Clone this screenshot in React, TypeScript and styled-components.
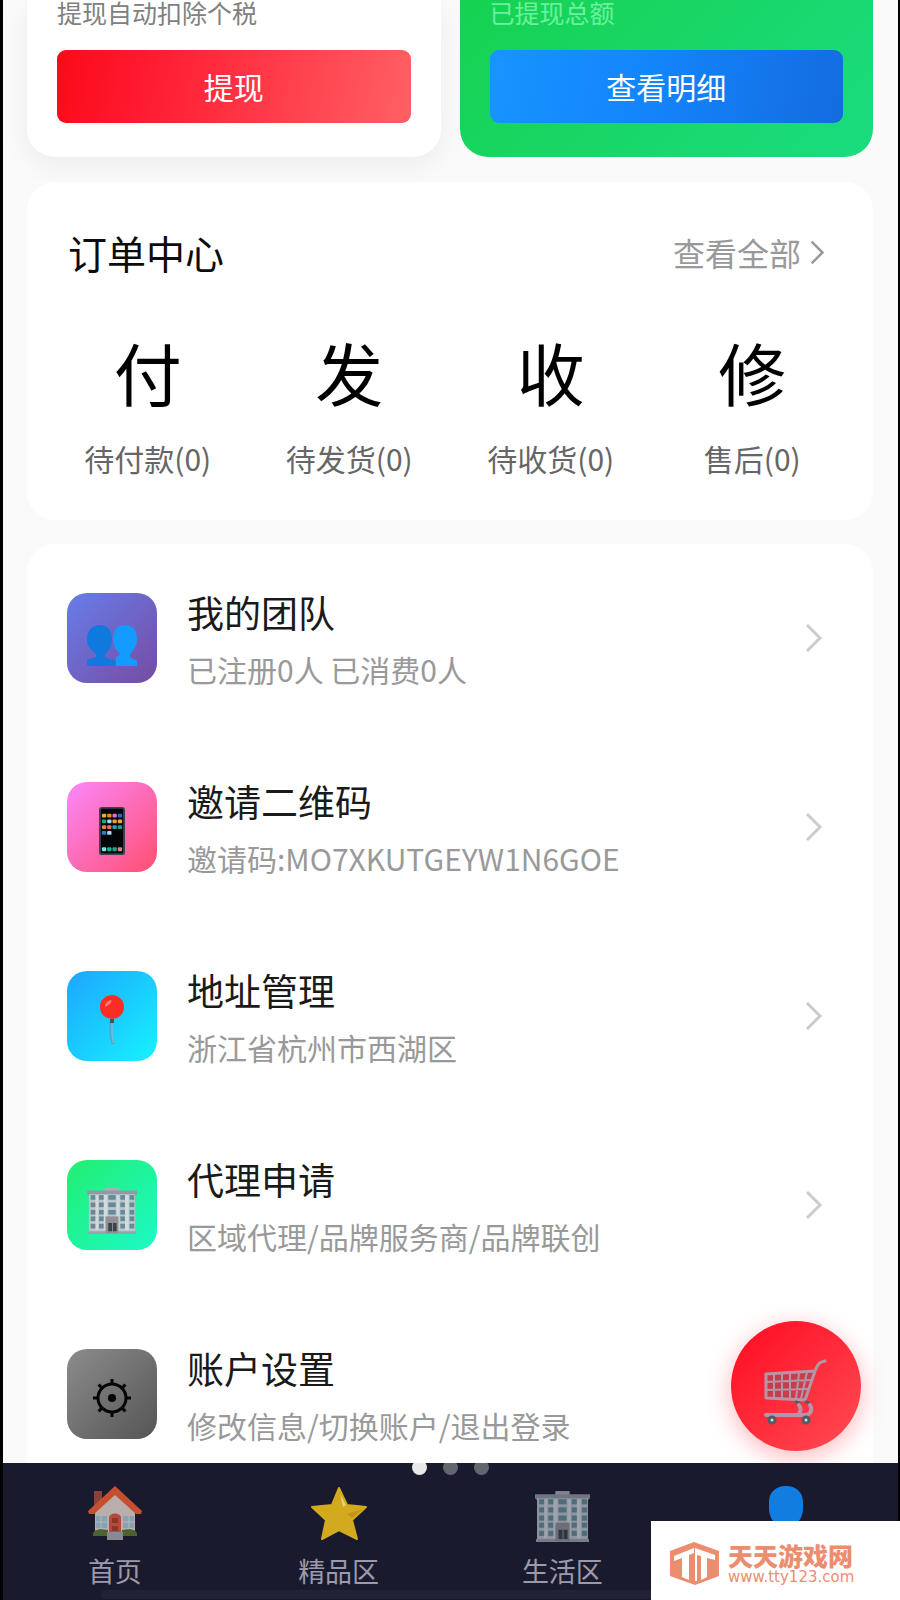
import React from 'react';
import styled, {createGlobalStyle} from "styled-components";

type OrderType = {
    glyph: string
    label: string
}

type MenuType = {
    title: string
    note: string
    background: string
    icon: React.ReactNode
}

type TabType = {
    id: string
    label?: string
    icon: React.ReactNode
}

const Chevron = ({size}: { size: number }) => (
    <svg width={size * 0.6} height={size} viewBox="0 0 18 30" fill="none" stroke="currentColor" strokeWidth="3">
        <path d="M2 2L15 15L2 28"/>
    </svg>
);

const TeamIcon = () => (
    <svg width="52" height="54" viewBox="0 0 52 54">
        <path fill="#149bff" d="M39 10c8 0 12 6 12 14 0 7-3 11-7 15v3c2 3 6 2 7 4v5H30v-9c3-1 4-2 4-3-4-4-7-8-7-15 0-8 4-14 12-14z"/>
        <path fill="#1079de" d="M14 10c8 0 12 6 12 14 0 7-2 11-7 15v3c2 2 9 2 10 4v5H1v-5c1-3 7-2 9-4v-3C5 35 1 31 1 24c0-8 5-14 13-14z"/>
    </svg>
);

const APPS = ['#f5a33b', '#f08a24', '#e86cc0', '#1f6fc4', '#23a58c', '#9ad9ee', '#f39a2d', '#f2a541', '#e9853a', '#f06a5a', '#2b9cc0', '#2a9c85', '#2f79c9', '#a7d8ee'];
const DOCK = ['#7fe0dc', '#2aa9a0', '#2a9d8f', '#f07a86'];

const PhoneIcon = () => (
    <svg width="26" height="50" viewBox="0 0 27 50">
        <rect x="1" y="1" width="25" height="48" rx="2" fill="#030406" stroke="#3b4250" strokeWidth="2"/>
        {APPS.map((color, i) => (
            <rect key={i} x={3 + (i % 4) * 5.5} y={7 + Math.floor(i / 4) * 6} width="4.5" height="4" rx="1" fill={color}/>
        ))}
        {DOCK.map((color, i) => (
            <rect key={i} x={3 + i * 5.5} y="42" width="4.5" height="4" rx="1" fill={color}/>
        ))}
    </svg>
);

const PinIcon = () => (
    <svg width="26" height="50" viewBox="0 0 26 50">
        <path d="M12 27v13c0 4 2 4 2 9" fill="none" stroke="#4fa6c9" strokeWidth="3"/>
        <path d="M13 27v13c0 4 1 4 1 8" fill="none" stroke="#8fc4d4" strokeWidth="1"/>
        <rect x="11" y="24" width="4" height="4" fill="#39566b"/>
        <circle cx="13" cy="12" r="12" fill="#fb2d25"/>
        <path d="M6 12c0-4 3-7 7-7l-2 4z" fill="#ff7a70"/>
    </svg>
);

const BuildingIcon = ({size, dim}: { size: number, dim?: boolean }) => (
    <svg width={size} height={size} viewBox="0 -4 54 54" opacity={dim ? 0.72 : 1}>
        <path fill="#a9afb7" d="M20 0h14v5H20z"/>
        <path fill="#9299a4" d="M0 3h54v4l-2 2H2L0 7z"/>
        <path fill="#bcc5cc" d="M2 7h50v42H2z"/>
        <path fill="#d2dadf" d="M9 8h3v38H9zM18 8h4v38h-4zM32 8h3v38h-3zM41 8h4v38h-4z"/>
        <path fill="#9aa3ab" d="M1 47h52v3H1z"/>
        {[8, 16, 24, 31, 39].map(y => (
            <g key={y} fill="#638c96">
                <rect x="4" y={y} width="5" height="5"/>
                <rect x="13" y={y} width="5" height="5"/>
                {y < 30 && <rect x="23" y={y} width="8" height="5"/>}
                <rect x="36" y={y} width="5" height="5"/>
                <rect x="46" y={y} width="5" height="5"/>
            </g>
        ))}
        <path fill="#8f8f95" d="M20 31h14v18H20z"/>
        <path fill="#39434d" d="M23 38h4v9h-4zM28 38h4v9h-4z"/>
    </svg>
);

const GearIcon = () => (
    <svg width="38" height="38" viewBox="0 0 38 38" fill="none" stroke="#050505" strokeWidth="3">
        <circle cx="19" cy="19" r="14"/>
        <circle cx="19" cy="19" r="4" fill="#050505" stroke="none"/>
        {[0, 45, 90, 135, 180, 225, 270, 315].map(angle => (
            <path key={angle} d="M19 0V6" transform={`rotate(${angle} 19 19)`}/>
        ))}
    </svg>
);

const CartIcon = () => (
    <svg width="64" height="68" viewBox="0 0 64 68" fill="none" stroke="#b795a8" strokeLinecap="round" strokeLinejoin="round">
        <path fill="#8a5363" fillOpacity="0.45" stroke="none" d="M2 15L51 12L41 41L2 39z"/>
        <path strokeWidth="2" d="M10 15V39M18 15V39M26 14V39M35 14L32 40M43 13L37 40M2 23L48 21M2 31L45 30"/>
        <path strokeWidth="3" d="M2 15L51 12L41 41L2 39zM51 12C54 4 56 3 61 2"/>
        <path stroke="#625865" strokeWidth="3" d="M32 43l3 1M42 43l3 1"/>
        <path strokeWidth="4" d="M35 46c2 3 2 6 0 9M46 46c3 5 0 10-5 10H2"/>
        <g stroke="#535c63" strokeWidth="3" fill="#b9e7e6">
            <circle cx="8" cy="61" r="3"/>
            <circle cx="42" cy="61" r="3"/>
        </g>
    </svg>
);

const HouseIcon = () => (
    <svg width="54" height="56" viewBox="0 0 54 56">
        <path fill="#8c4136" d="M6 5h8v17H6z"/>
        <path fill="#b9aeab" d="M7 25L27 5l20 20v24H7z"/>
        <path fill="#c4502f" d="M27 0L54 25l-1 3h-5L27 9 6 28H1l-1-3z"/>
        <path fill="#86a3b5" d="M8 30h11v12H8zM35 30h11v12H35z"/>
        <path stroke="#b9b4b5" strokeWidth="1" d="M13 30v12M8 36h11M41 30v12M35 36h11"/>
        <path fill="#b54a37" d="M21 46V32c0-6 12-6 12 0v14z"/>
        <path fill="#8c3529" d="M24 32h6v5h-6zM24 40h6v5h-6z"/>
        <path fill="#4b6332" d="M5 50c-1-6 5-8 15-6v6zM34 44c10-2 16 0 15 6H34z"/>
        <path fill="#898991" d="M19 46h16v8H19z"/>
    </svg>
);

const StarIcon = () => (
    <svg width="56" height="56" viewBox="0 0 56 56">
        <path fill="#d2aa1d" stroke="#d2aa1d" strokeWidth="2" strokeLinejoin="round" d="M28 2l8 17 19 2-14 13 5 19-18-9-17 9 4-19L1 21l20-2z"/>
        <path fill="#e5d27a" d="M29 8l6 11-3 2z"/>
        <path fill="#c4941a" d="M52 23L41 32l-5-4z"/>
    </svg>
);

const UserIcon = () => (
    <svg width="54" height="56" viewBox="0 0 54 56">
        <path fill="#127de1" d="M27 0c11 0 17 7 17 16v6c0 9-4 14-10 18v4c2 4 17 3 17 12H3c0-9 15-8 17-12v-4c-6-4-10-9-10-18v-6C10 7 16 0 27 0z"/>
    </svg>
);

const LogoIcon = () => (
    <svg width="50" height="44" viewBox="0 0 50 44">
        <path fill="#ed8d70" d="M24 0l25 9v25L25 43 0 34V9z"/>
        <path fill="#fff" d="M4 14l20-8v5l-5 2v25l-7-3V16l-8 3z"/>
        <path fill="#fff" d="M25 6l20 7v5l-8-2v19l-6 3V14l-4-1v26h-2z"/>
    </svg>
);

const orders: OrderType[] = [
    {glyph: '付', label: '待付款(0)'},
    {glyph: '发', label: '待发货(0)'},
    {glyph: '收', label: '待收货(0)'},
    {glyph: '修', label: '售后(0)'},
];

const menu: MenuType[] = [
    {title: '我的团队', note: '已注册0人 已消费0人', background: '#667eea, #764ba2', icon: <TeamIcon/>},
    {title: '邀请二维码', note: '邀请码:MO7XKUTGEYW1N6GOE', background: '#fb88fb, #ff4f70', icon: <PhoneIcon/>},
    {title: '地址管理', note: '浙江省杭州市西湖区', background: '#1ea5ff, #16f2ff', icon: <PinIcon/>},
    {title: '代理申请', note: '区域代理/品牌服务商/品牌联创', background: '#22ee70, #1cfac8', icon: <BuildingIcon size={50}/>},
    {title: '账户设置', note: '修改信息/切换账户/退出登录', background: '#8c8c8c, #555555', icon: <GearIcon/>},
];

const tabs: TabType[] = [
    {id: 'home', label: '首页', icon: <HouseIcon/>},
    {id: 'featured', label: '精品区', icon: <StarIcon/>},
    {id: 'life', label: '生活区', icon: <BuildingIcon size={55} dim/>},
    {id: 'mine', icon: <UserIcon/>},
];

const App = () => {
    return (
        <Screen>
            <GlobalStyle/>
            <Content>
                <Wallet>
                    <WalletCard>
                        <WalletNote>提现自动扣除个税</WalletNote>
                        <WalletButton colors="#fb0a18, #ff1a30 25%, #ff6065">提现</WalletButton>
                    </WalletCard>
                    <WalletCard green>
                        <WalletNote green>已提现总额</WalletNote>
                        <WalletButton colors="#1894ff, #1385fb 45%, #146be0">查看明细</WalletButton>
                    </WalletCard>
                </Wallet>
                <Orders>
                    <OrdersHeader>
                        <OrdersTitle>订单中心</OrdersTitle>
                        <AllLink href="#orders">查看全部<Chevron size={25}/></AllLink>
                    </OrdersHeader>
                    <OrdersGrid>
                        {orders.map(order => (
                            <OrderButton key={order.glyph}>
                                <OrderGlyph>{order.glyph}</OrderGlyph>
                                <OrderLabel>{order.label}</OrderLabel>
                            </OrderButton>
                        ))}
                    </OrdersGrid>
                </Orders>
                <Menu>
                    {menu.map(item => (
                        <MenuRow key={item.title} href="#menu">
                            <MenuIcon colors={item.background}>{item.icon}</MenuIcon>
                            <MenuText>
                                <MenuTitle>{item.title}</MenuTitle>
                                <MenuNote>{item.note}</MenuNote>
                            </MenuText>
                            <MenuArrow><Chevron size={30}/></MenuArrow>
                        </MenuRow>
                    ))}
                </Menu>
            </Content>
            <CartButton aria-label="购物车"><CartIcon/></CartButton>
            <TabBar>
                {tabs.map(tab => (
                    <Tab key={tab.id} href={`#${tab.id}`}>
                        <TabIcon>{tab.icon}</TabIcon>
                        {tab.label}
                    </Tab>
                ))}
                <Dots>
                    <Dot active/>
                    <Dot/>
                    <Dot/>
                </Dots>
                <HomeBar/>
            </TabBar>
            <SiteBadge>
                <LogoIcon/>
                <div>
                    <SiteName>天天游戏网</SiteName>
                    <SiteUrl>www.tty123.com</SiteUrl>
                </div>
            </SiteBadge>
        </Screen>
    );
}

export default App;

const GlobalStyle = createGlobalStyle`
  * {
    box-sizing: border-box;
  }
  body {
    margin: 0;
    font-family: "Noto Sans CJK SC", sans-serif;
    background: #000;
  }
  a {
    text-decoration: none;
  }
  button {
    padding: 0;
    border: none;
    background: none;
    font-family: inherit;
    cursor: pointer;
  }
`;
const Screen = styled.div`
  position: relative;
  display: flex;
  flex-direction: column;
  height: 100vh;
  overflow: hidden;
  padding: 0 2px 0 3px;
  background: #000;
`;
const Content = styled.main`
  flex: 1;
  min-height: 0;
  overflow: hidden;
  padding: 0 25px 0 24px;
  background: #fafafa;
`;
const Wallet = styled.section`
  display: grid;
  grid-template-columns: 1fr 1fr;
  gap: 19px;
`;
const WalletCard = styled.div<{ green?: boolean }>`
  padding: 0 30px 34px;
  border-radius: 0 0 28px 28px;
  background: ${(props) => props.green ? 'linear-gradient(135deg, #16d250, #1adc80)' : '#fff'};
  box-shadow: ${(props) => props.green ? 'none' : '0 8px 30px rgba(0, 0, 0, 0.06)'};
`;
const WalletNote = styled.div<{ green?: boolean }>`
  margin-bottom: 26px;
  font-size: 25px;
  line-height: 24px;
  color: ${(props) => props.green ? '#6cf0a0' : '#808080'};
`;
const WalletButton = styled.button<{ colors: string }>`
  width: 100%;
  height: 73px;
  padding-bottom: 2px;
  border-radius: 9px;
  font-size: 30px;
  color: #fff;
  background: linear-gradient(100deg, ${(props) => props.colors});
`;
const Orders = styled.section`
  position: relative;
  margin-top: 25px;
  padding: 46px 20px 42px;
  border-radius: 28px;
  background: #fff;
`;
const OrdersHeader = styled.div`
  display: flex;
  align-items: center;
  justify-content: space-between;
  padding: 0 28px 0 21px;
`;
const OrdersTitle = styled.h2`
  margin: 0;
  font-size: 39px;
  font-weight: 400;
  line-height: 48px;
  color: #0c0c0c;
`;
const AllLink = styled.a`
  display: flex;
  align-items: center;
  gap: 9px;
  font-size: 32px;
  line-height: 48px;
  color: #999;
`;
const OrdersGrid = styled.div`
  display: grid;
  grid-template-columns: repeat(4, 1fr);
  margin-top: 56px;
`;
const OrderButton = styled.button`
  display: flex;
  flex-direction: column;
  align-items: center;
  gap: 26px;
`;
const OrderGlyph = styled.span`
  font-size: 68px;
  line-height: 80px;
  color: #000;
`;
const OrderLabel = styled.span`
  font-size: 30px;
  line-height: 40px;
  color: #666;
`;
const Menu = styled.nav`
  margin-top: 24px;
  border-radius: 28px;
  background: #fff;
`;
const MenuRow = styled.a`
  display: flex;
  align-items: center;
  gap: 30px;
  height: 189px;
  padding: 0 50px 0 40px;
  border-bottom: 1px solid #fefefe;
`;
const MenuIcon = styled.span<{ colors: string }>`
  display: flex;
  align-items: center;
  justify-content: center;
  flex-shrink: 0;
  width: 90px;
  height: 90px;
  padding-top: 8px;
  border-radius: 20px;
  background: linear-gradient(135deg, ${(props) => props.colors});
`;
const MenuText = styled.span`
  display: flex;
  flex: 1;
  flex-direction: column;
  gap: 13px;
  padding-bottom: 3px;
`;
const MenuTitle = styled.span`
  font-size: 37px;
  line-height: 52px;
  color: #1a1a1a;
`;
const MenuNote = styled.span`
  font-size: 30px;
  line-height: 36px;
  color: #999;
`;
const MenuArrow = styled.span`
  display: flex;
  color: #ccc;
`;
const CartButton = styled.button`
  position: absolute;
  right: 39px;
  bottom: 149px;
  display: flex;
  align-items: center;
  justify-content: center;
  width: 130px;
  height: 130px;
  padding-top: 14px;
  border-radius: 50%;
  background: linear-gradient(135deg, #ff0a20, #ff4d55);
  box-shadow: 0 6px 24px rgba(255, 50, 60, 0.35);
`;
const TabBar = styled.nav`
  position: relative;
  display: grid;
  grid-template-columns: repeat(4, 1fr);
  height: 137px;
  padding-top: 23px;
  background: #1a1a2e;
`;
const Tab = styled.a`
  display: flex;
  flex-direction: column;
  align-items: center;
  gap: 9px;
  font-size: 27px;
  line-height: 40px;
  color: #9a9aac;
`;
const TabIcon = styled.span`
  display: flex;
  align-items: center;
  justify-content: center;
  height: 56px;
`;
const Dots = styled.div`
  position: absolute;
  top: -3px;
  left: 0;
  right: 0;
  display: flex;
  justify-content: center;
  gap: 16px;
`;
const Dot = styled.span<{ active?: boolean }>`
  width: 15px;
  height: 15px;
  border-radius: 50%;
  background: ${(props) => props.active ? '#e9e9ec' : '#65656f'};
  clip-path: inset(3px 0 0 0);
`;
const HomeBar = styled.div`
  position: absolute;
  bottom: 1px;
  left: 11%;
  right: 11%;
  height: 9px;
  border-radius: 5px;
  background: #222236;
`;
const SiteBadge = styled.aside`
  position: absolute;
  right: 0;
  bottom: 0;
  display: flex;
  align-items: center;
  gap: 8px;
  width: 249px;
  height: 79px;
  padding: 6px 0 0 19px;
  background: #fff;
  color: #ed8d70;
`;
const SiteName = styled.div`
  font-size: 25px;
  font-weight: 900;
  line-height: 27px;
`;
const SiteUrl = styled.div`
  font-family: "DejaVu Sans", sans-serif;
  font-size: 15px;
  line-height: 17px;
`;
